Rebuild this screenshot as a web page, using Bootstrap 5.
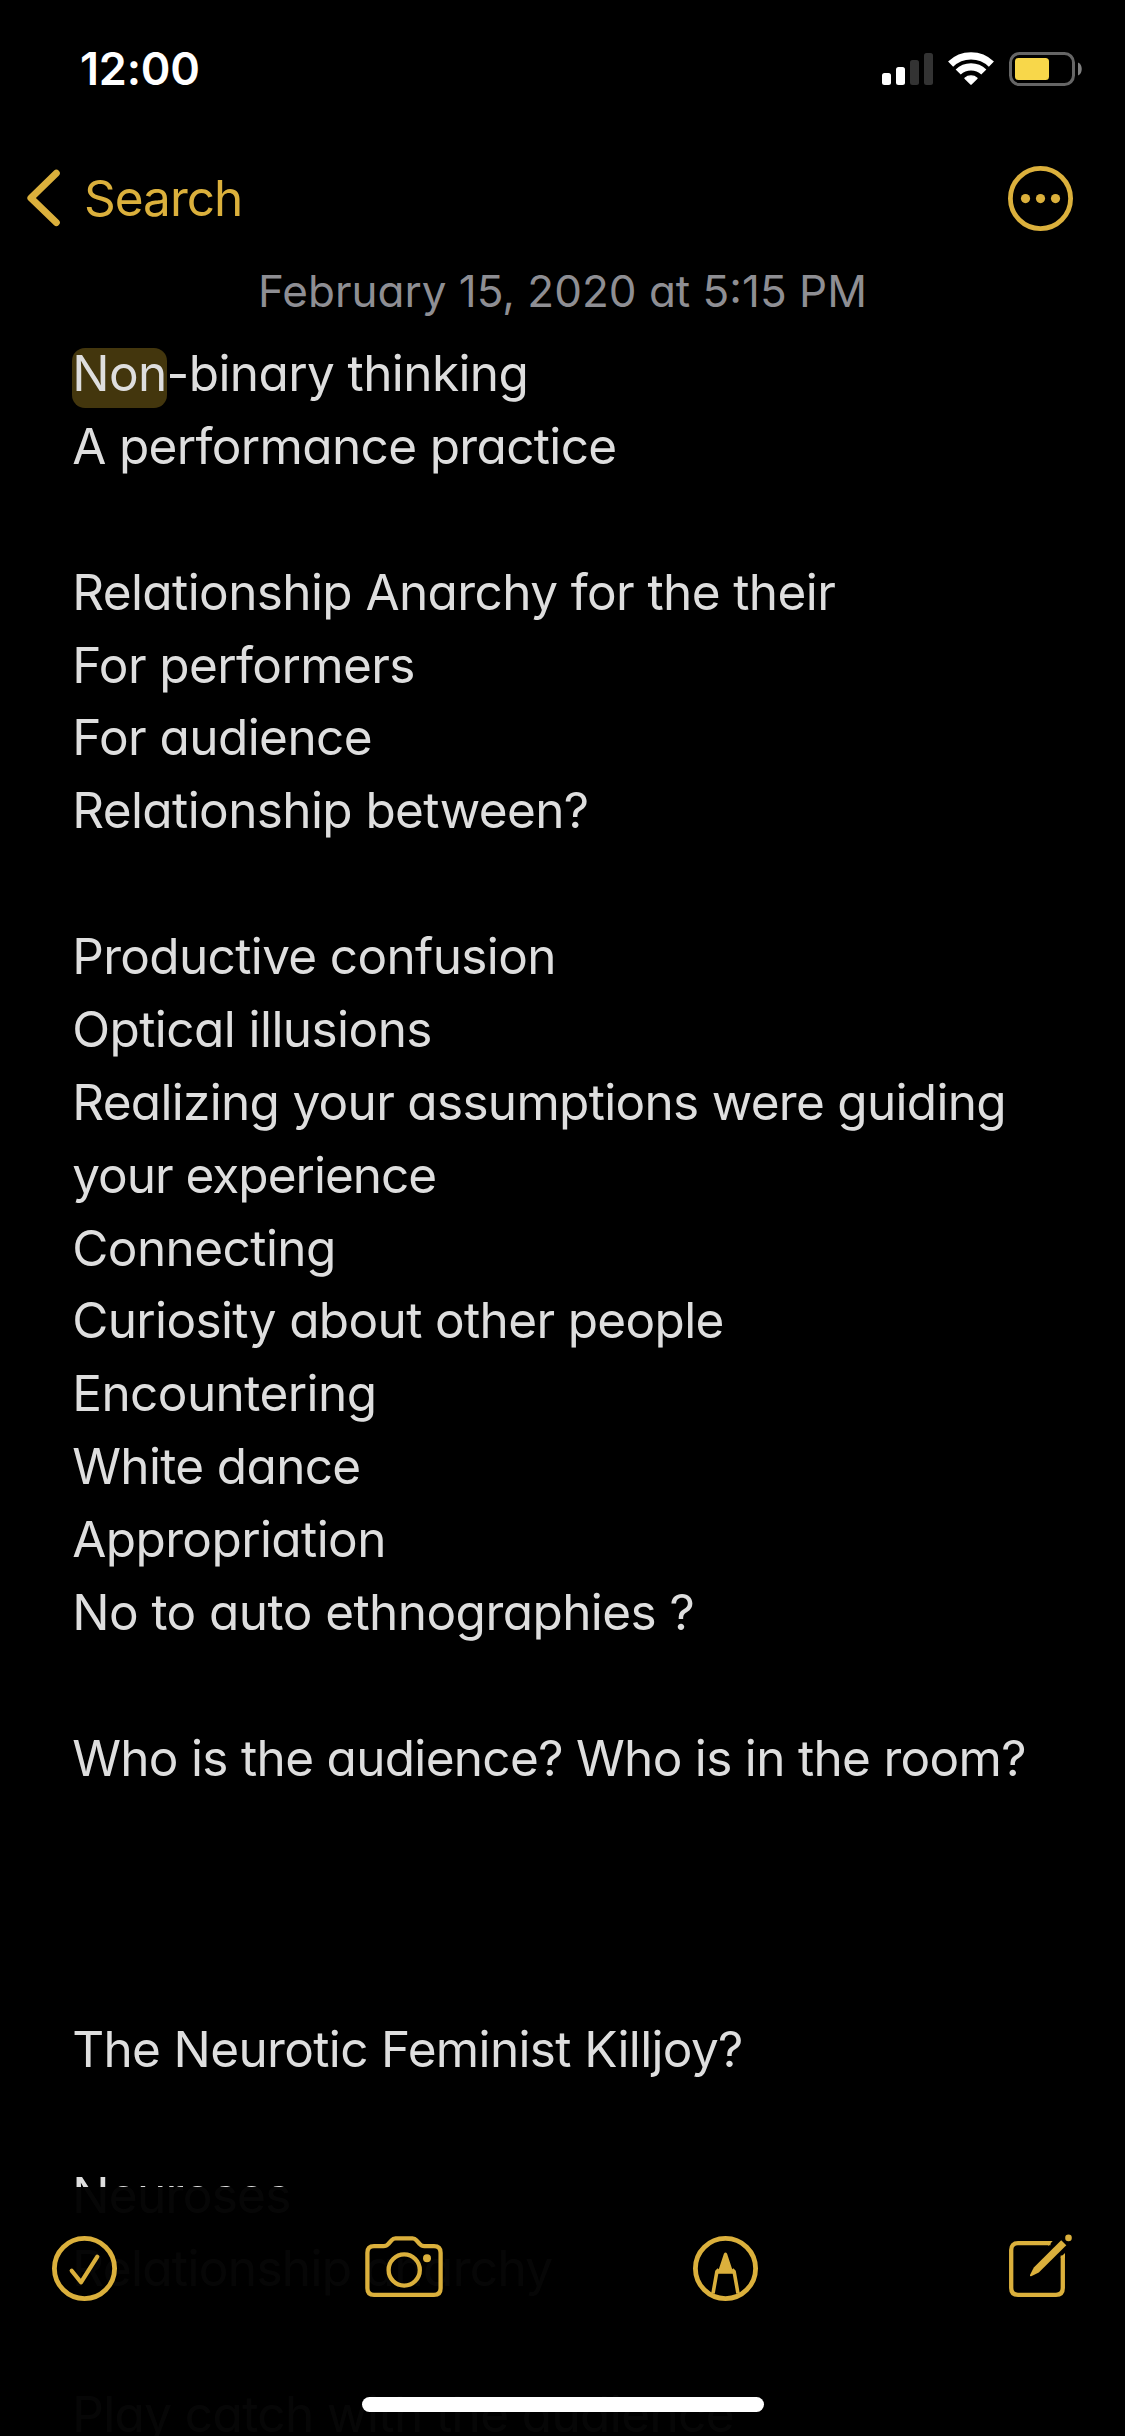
<!DOCTYPE html>
<html lang="en" data-bs-theme="dark">
<head>
<meta charset="utf-8">
<meta name="viewport" content="width=device-width, initial-scale=1">
<title>Notes</title>
<link href="https://cdn.jsdelivr.net/npm/bootstrap@5.3.0/dist/css/bootstrap.min.css" rel="stylesheet">
<style>
  :root { --gold: #dbb03c; }
  body { background: #000; color: #dedede; font-family: Inter, "Liberation Sans", sans-serif; height: 2436px; }
  svg { display: block; flex: none; }
  .status-bar { height: 140px; padding: 52px 43px 0 80px; }
  .clock { font-size: 45px; font-weight: 600; line-height: 34px; letter-spacing: -.2px; color: #fff; }
  .signals { gap: 15px; }
  .top-nav { height: 117px; padding: 24px 50px 0 25px; color: var(--gold); }
  .back-link { gap: 19px; height: 68px; color: var(--gold); font-size: 49.5px; line-height: 68px; letter-spacing: -1px; }
  .note-date { font-size: 44px; line-height: 68px; height: 80px; color: #8e8e93; font-feature-settings: "cv11"; }
  .note-body { padding-left: 72.2px; font-size: 49.5px; line-height: 72.88px; font-feature-settings: "cv11"; letter-spacing: -.6px; }
  .note-body p { margin: 0; height: 72.88px; white-space: nowrap; }
  .track-a { letter-spacing: -.56px; }
  .track-c { letter-spacing: -.65px; }
  .track-d { letter-spacing: -.69px; }
  .track-e { letter-spacing: -1px; }
  .found { position: relative; z-index: 0; }
  .found::before { content: ""; position: absolute; z-index: -1; inset: 5px 0 -5px 0; border-radius: 13px; background: #43360d; }
  .tool-bar { height: 249px; padding: 47px 53px 0 52px; background: rgba(0,0,0,.972); }
  .tool-nudge { margin-left: -3px; }
  .home-bar { left: 362px; top: 210px; width: 402px; height: 15px; background: #fff; }
</style>
<script src="https://cdn.jsdelivr.net/npm/bootstrap@5.3.0/dist/js/bootstrap.bundle.min.js"></script>
</head>
<body class="overflow-hidden m-0">
<header>
  <div class="status-bar d-flex justify-content-between align-items-start">
    <div class="clock">12:00</div>
    <div class="signals d-flex">
      <svg width="51" height="34" fill="#fff"><rect y="21" width="9" height="12" rx="2.5"/><rect x="14" y="15" width="9" height="18" rx="2.5"/><g fill="#333"><rect x="28" y="8" width="9" height="25" rx="2.5"/><rect x="42" y="1" width="9" height="32" rx="2.5"/></g></svg>
      <svg width="46" height="34" viewBox="0 0 46 34" fill="none" stroke="#fff" stroke-width="7.3"><path d="M2.6 12.1A29.3 29.3 0 0 1 43.4 12.1"/><path d="M10.2 20A18.3 18.3 0 0 1 35.8 20"/><path d="M23 32.2L16.9 26.2A9.3 9.3 0 0 1 29.1 26.2Z" fill="#fff" stroke-width="1.2" stroke-linejoin="round"/></svg>
      <svg width="73" height="34"><rect x="1.5" y="1.5" width="63" height="31" rx="9" fill="none" stroke="#666" stroke-width="3"/><rect x="6" y="6" width="34" height="22" rx="3.5" fill="#f8d74a"/><path d="M69 10.5C74 12.5 74 21.500 69 23.500Z" fill="#808080"/></svg>
    </div>
  </div>
  <nav class="top-nav d-flex justify-content-between align-items-start">
    <a href="#" class="back-link d-flex align-items-center text-decoration-none">
      <svg width="40" height="68" fill="none" stroke="#dbb03c" stroke-width="7" stroke-linecap="round" stroke-linejoin="round"><path d="M31.300 9.300L5.900 34L31.300 58.500"/></svg>
      <span>Search</span>
    </a>
    <svg width="68" height="68"><circle cx="33.500" cy="34.500" r="30.100" fill="none" stroke="#dbb03c" stroke-width="4.800"/><g fill="#dbb03c"><circle cx="18.500" cy="34.600" r="4.600"/><circle cx="33.500" cy="34.600" r="4.600"/><circle cx="48.500" cy="34.600" r="4.600"/></g></svg>
  </nav>
</header>
<main>
  <div class="note-date text-center">February 15, 2020 at 5:15 PM</div>
  <article class="note-body">
    <p><span class="found">Non</span>-binary thinking</p>
    <p class="track-c">A performance practice</p>
    <p></p>
    <p>Relationship Anarchy for the their</p>
    <p>For performers</p>
    <p class="track-a">For audience</p>
    <p>Relationship between?</p>
    <p></p>
    <p class="track-c">Productive confusion</p>
    <p class="track-a">Optical illusions</p>
    <p class="track-d">Realizing your assumptions were guiding</p>
    <p class="track-e">your experience</p>
    <p class="track-a">Connecting</p>
    <p class="track-c">Curiosity about other people</p>
    <p class="track-a">Encountering</p>
    <p class="track-c">White dance</p>
    <p>Appropriation</p>
    <p class="track-a">No to auto ethnographies ?</p>
    <p></p>
    <p class="track-d">Who is the audience? Who is in the room?</p>
    <p></p>
    <p></p>
    <p></p>
    <p class="track-c">The Neurotic Feminist Killjoy?</p>
    <p></p>
    <p class="track-d">Neuroses</p>
    <p class="track-c">Relationship anarchy</p>
    <p></p>
    <p>Play catch with the audience</p>
  </article>
</main>
<footer class="tool-bar fixed-bottom d-flex justify-content-between align-items-start">
  <svg width="65" height="68" fill="none" stroke="#dbb03c"><circle cx="32.500" cy="34.500" r="30.100" stroke-width="4.800"/><path d="M19.700 36.700L29 48.300L45.300 22.700" stroke-width="4.200" stroke-linecap="round" stroke-linejoin="round"/></svg>
  <svg class="tool-nudge" width="78" height="68" fill="none" stroke="#dbb03c" stroke-width="4.300"><path d="M9 12.200H18.500Q21.500 12.200 23.300 10L26.500 6.400Q28.200 4.400 30.500 4.400H47.500Q49.800 4.400 51.500 6.400L54.700 10Q56.500 12.200 59.500 12.200H69Q75.600 12.200 75.600 18.800V54.200Q75.600 60.800 69 60.800H9Q2.400 60.800 2.400 54.200V18.800Q2.400 12.200 9 12.200Z"/><circle cx="39.200" cy="36" r="15.600"/><circle cx="62" cy="24.300" r="4" fill="#dbb03c" stroke="none"/></svg>
  <svg width="65" height="68" fill="none" stroke="#dbb03c"><circle cx="32.500" cy="34.500" r="30.100" stroke-width="4.800"/><path d="M20 59.500L23.900 37.500L26 35.500M45 59.500L41.100 37.500L39 35.500" stroke-width="3.600" stroke-linejoin="round"/><path d="M30.900 19.800Q32.500 17.300 34.100 19.800L39.300 35.500L42 38V39.700H23V38L25.700 35.500Z" fill="#dbb03c" stroke="none"/></svg>
  <svg width="63" height="68" fill="none" stroke="#dbb03c"><path d="M41.500 9.200H9Q2.200 9.200 2.200 16V54Q2.200 60.800 9 60.800H47Q53.800 60.800 53.800 54V21.500" stroke-width="4.300"/><g fill="#dbb03c" stroke="none"><path d="M39 7H43.700L39.700 11.400H39ZM51.700 24V23.300L56 19V24Z"/><path d="M52.200 6.300L57.300 11.300L29.800 38.500L22.200 42.300Q20.600 42.600 21 41L24.800 33.600Z"/><circle cx="59.500" cy="3.900" r="3.300"/></g></svg>
  <div class="home-bar position-absolute rounded-pill"></div>
</footer>
</body>
</html>
